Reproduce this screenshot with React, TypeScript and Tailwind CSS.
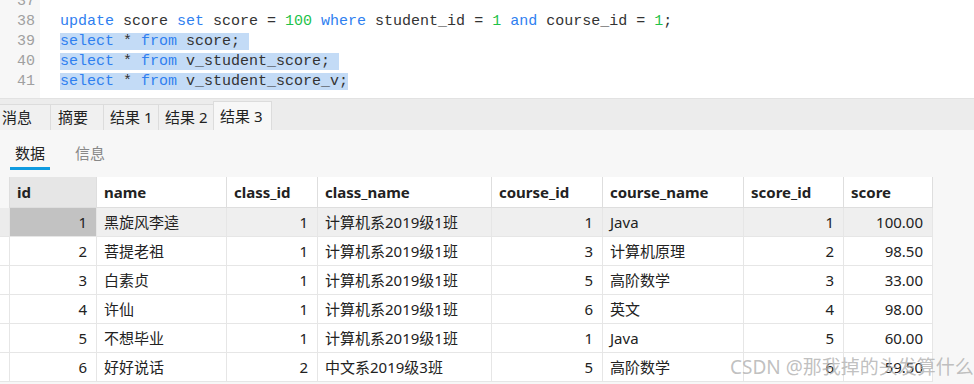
import React from 'react';

const cols = [
  { key: 'id', w: 'w-[87px]', right: true },
  { key: 'name', w: 'w-[130px]', right: false },
  { key: 'class_id', w: 'w-[91px]', right: true },
  { key: 'class_name', w: 'w-[174px]', right: false },
  { key: 'course_id', w: 'w-[111px]', right: true },
  { key: 'course_name', w: 'w-[141px]', right: false },
  { key: 'score_id', w: 'w-[100px]', right: true },
  { key: 'score', w: 'w-[89px]', right: true },
];

const rows = [
  ['1', '黑旋风李逵', '1', '计算机系2019级1班', '1', 'Java', '1', '100.00'],
  ['2', '菩提老祖', '1', '计算机系2019级1班', '3', '计算机原理', '2', '98.50'],
  ['3', '白素贞', '1', '计算机系2019级1班', '5', '高阶数学', '3', '33.00'],
  ['4', '许仙', '1', '计算机系2019级1班', '6', '英文', '4', '98.00'],
  ['5', '不想毕业', '1', '计算机系2019级1班', '1', 'Java', '5', '60.00'],
  ['6', '好好说话', '2', '中文系2019级3班', '5', '高阶数学', '6', '59.50'],
];

const Kw = ({ children }: { children: React.ReactNode }) => <span className="text-[#2f80f0]">{children}</span>;
const Num = ({ children }: { children: React.ReactNode }) => <span className="text-[#1fc24a]">{children}</span>;

export default function App() {
  const tabs = ['消息', '摘要', '结果 1', '结果 2'];
  return (
    <div className="w-[974px] h-[384px] overflow-hidden bg-[#f7f7f7] relative font-['Noto_Sans','Noto_Sans_CJK_SC',sans-serif] text-[15px] text-[#222]">
      {/* editor */}
      <div className="h-[98px] bg-white flex overflow-hidden">
        <div className="w-[40px] bg-[#f7f7f7] shrink-0 -mt-[8px] font-['Liberation_Mono',monospace] text-[15px] leading-[20px] text-[#a0a0a0] text-right pr-[5px]">
          <div>37</div>
          <div>38</div>
          <div>39</div>
          <div>40</div>
          <div>41</div>
        </div>
        <div className="pl-[20px] -mt-[8px] font-['Liberation_Mono',monospace] text-[15px] leading-[20px] text-[#333] whitespace-pre">
          <div> </div>
          <div>
            <Kw>update</Kw> score <Kw>set</Kw> score = <Num>100</Num> <Kw>where</Kw> student_id = <Num>1</Num> <Kw>and</Kw> course_id = <Num>1</Num>;
          </div>
          <div><span className="bg-[#c3dbf6]"><Kw>select</Kw> * <Kw>from</Kw> score; </span></div>
          <div><span className="bg-[#c3dbf6]"><Kw>select</Kw> * <Kw>from</Kw> v_student_score; </span></div>
          <div><span className="bg-[#c3dbf6]"><Kw>select</Kw> * <Kw>from</Kw> v_student_score_v;</span></div>
        </div>
      </div>

      {/* result tabs */}
      <div className="h-[32px] bg-[#ececec] border-t border-[#e2e2e2] flex items-end">
        {tabs.map((t, i) => (
          <div
            key={t}
            className={`h-[26px] flex items-center border border-b-0 border-[#dcdcdc] bg-[#f0f0f0] ${i === 0 ? 'w-[51px] pl-[2px] border-l-0' : i === 1 ? 'w-[54px] pl-[7px]' : 'w-[56px] pl-[6px]'} -ml-px first:ml-0`}
          >
            {t}
          </div>
        ))}
        <div className="h-[29px] w-[59px] flex items-center pl-[6px] bg-[#f7f7f7] border border-b-0 border-[#dcdcdc] -ml-px">结果 3</div>
      </div>

      {/* sub tabs */}
      <div className="h-[47px] flex pl-[10px] pt-[11px]">
        <div className="w-[40px] flex flex-col items-center">
          <span className="leading-[24px]">数据</span>
          <div className="h-[3px] w-[40px] bg-[#0f9be0] mt-[2px]" />
        </div>
        <span className="ml-[25px] leading-[24px] text-[#888]">信息</span>
      </div>

      {/* table */}
      <div className="w-[933px]">
        <div className="flex h-[31px] bg-white">
          <div className="w-[10px] bg-[#f7f7f7] border-r border-[#dedede]" />
          {cols.map((c, i) => (
            <div
              key={c.key}
              className={`${c.w} border-r border-b border-[#dedede] flex items-center pl-[7px] font-bold ${i === 0 ? 'bg-[#e6e6e6]' : ''}`}
            >
              {c.key}
            </div>
          ))}
        </div>
        {rows.map((r, ri) => (
          <div key={ri} className={`flex h-[29px] ${ri === 0 ? 'bg-[#efefef]' : 'bg-white'}`}>
            <div className={`w-[10px] border-r border-b border-[#e6e6e6] ${ri === 0 ? 'bg-[#ececec]' : ''}`} />
            {cols.map((c, ci) => (
              <div
                key={c.key}
                className={`${c.w} border-r border-b border-[#e6e6e6] flex items-center ${c.right ? 'justify-end pr-[9px]' : 'pl-[7px]'} ${ri === 0 && ci === 0 ? 'bg-[#c2c2c2]' : ''}`}
              >
                {r[ci]}
              </div>
            ))}
          </div>
        ))}
      </div>

      {/* watermark */}
      <div className="absolute left-[730px] top-[354px] text-[19px] leading-[26px] text-[#b0b0b0]/80 whitespace-nowrap">
        CSDN @那我掉的头发算什么
      </div>
    </div>
  );
}
